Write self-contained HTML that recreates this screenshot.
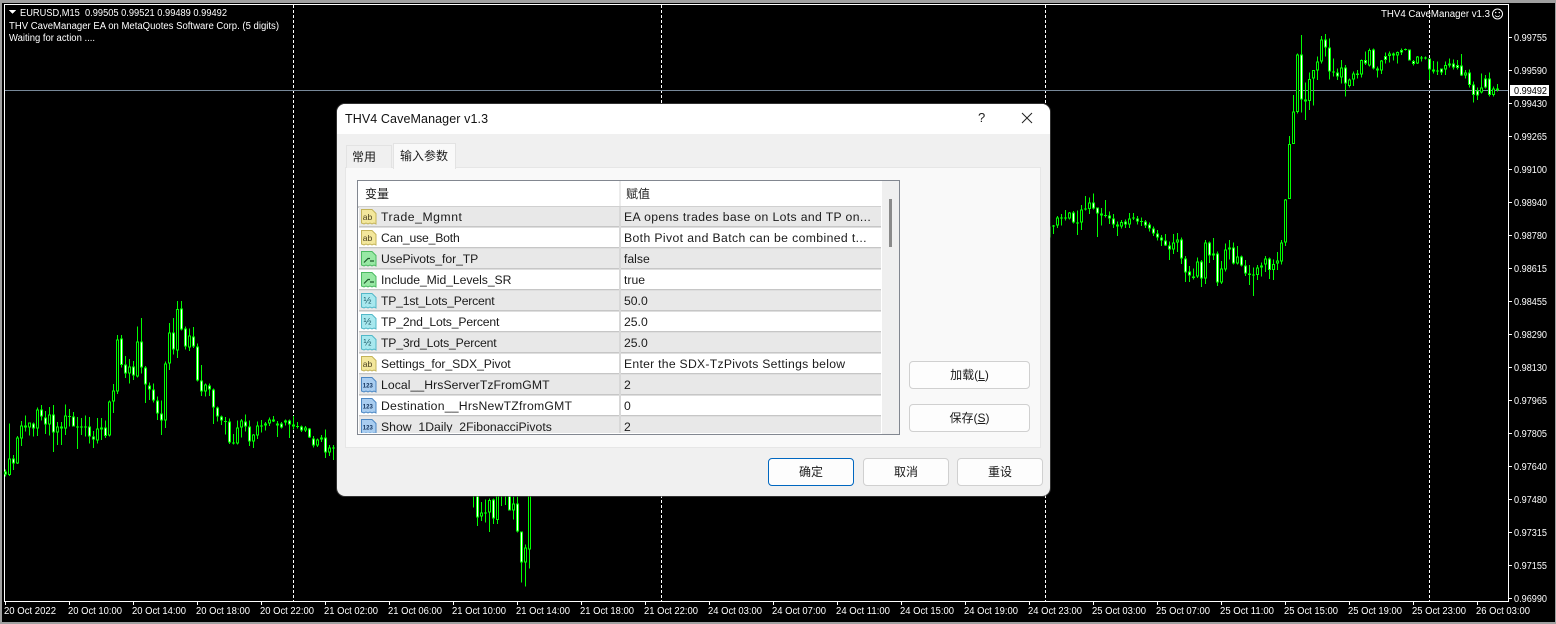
<!DOCTYPE html>
<html lang="zh"><head><meta charset="utf-8"><title>THV4 CaveManager v1.3</title>
<style>
html,body{margin:0;padding:0;width:1556px;height:624px;overflow:hidden;background:#a0a0a0}
body{position:relative;font-family:"Liberation Sans","Noto Sans CJK SC",sans-serif}
svg.chart{position:absolute;left:0;top:0}
.chart text{font-family:"Liberation Sans",sans-serif;font-size:10px;fill:#fff}
.a{position:absolute;white-space:nowrap}
#dlg{position:absolute;left:337px;top:104px;width:713px;height:392px;background:#f0f0f0;border-radius:8px;overflow:hidden;box-shadow:0 0 0 1px rgba(70,70,70,.7);font-size:12.2px;color:#1a1a1a}
#tb{position:absolute;left:0;top:0;width:713px;height:30px;background:#fff}
.panel{position:absolute;left:8px;top:63px;width:694px;height:279px;background:#f9f9f9;border:1px solid #e6e6e6}
.tab{position:absolute;font-size:12px;border:1px solid #e3e3e3;border-bottom:none;box-sizing:border-box;background:#f0f0f0}
.table{position:absolute;left:20px;top:76px;width:543px;height:255px;box-sizing:border-box;border:1px solid #828790;background:#fff;overflow:hidden}
.row{position:absolute;left:1px;width:522px;height:21px;box-sizing:border-box;border-bottom:1px solid #dedede;box-shadow:inset 0 -1px 0 #c6c6c6}
.row.e{background:#e8e8e8}
.row svg{position:absolute;left:2px;top:2px}
.row .n{position:absolute;left:22px;top:0;line-height:20px;white-space:nowrap}
.row .v{position:absolute;left:265px;top:0;line-height:20px;white-space:nowrap}
.row:before{content:"";position:absolute;left:260px;top:0;bottom:-1px;width:2px;background:#d8d8d8}
.btn{position:absolute;box-sizing:border-box;background:#fdfdfd;border:1px solid #d0d0d0;border-radius:4px;text-align:center;font-size:12px;line-height:26px;color:#1a1a1a}
.btn u{text-underline-offset:1px}
.icon text{font-family:"Liberation Sans",sans-serif}
.ab{font-size:8.5px;fill:#4a4020}
.ha{font-size:9.5px;fill:#1d5a66}
.nn{font-size:6px;font-weight:bold;fill:#10305a}
</style></head><body>
<svg class="chart" width="1556" height="624" viewBox="0 0 1556 624" shape-rendering="crispEdges">
<rect x="2" y="3" width="1553" height="619" fill="#000"/>
<path d="M4.5 4.500H1508.500V601.500H4.500Z" fill="none" stroke="#fff"/>
<path d="M293.5 5V601M661.5 5V601M1045.5 5V601M1429.5 5V601" stroke="#fff" stroke-dasharray="3 2"/>
<path d="M5 90.5H1508" stroke="#778899"/>
<g fill="none">
<g transform="translate(.1667,290) scale(.33333)">
<path stroke="#0f0" stroke-width="3" d="M16 538V560M28 400V558M40 495V540M52 438V522M64 393V468M76 376V424M88 397V436M100 398V440M112 352V438M124 345V392M136 363V432M148 351V436M160 345V486M172 396V465M184 396V465M196 343V435M208 357V410M220 366V410M232 381V477M244 384V435M256 376V440M268 381V460M280 423V474M292 384V460M304 384V450M316 392V444M328 332V440M340 282V369M352 135V312M364 135V232M376 198V264M388 207V280M400 213V270M412 109V262M424 84V250M436 228V339M448 277V330M460 280V338M472 319V390M484 331V435M496 214V414M508 99V240M520 84V193M532 33V204M544 33V122M556 110V178M568 115V183M580 111V174M592 160V275M604 225V318M616 280V320M628 280V318M640 295V402M652 349V395M664 376V405M676 381V433M688 385V462M700 432V464M712 391V464M724 387V442M736 373V425M748 391V468M760 432V474M772 395V447M784 390V428M796 396V422M808 383V408M820 378V396M832 393V441M844 396V416M856 388V406M868 388V444M880 378V418M892 396V416M904 406V426M916 408V426M928 414V444M940 438V472M952 446V471M964 435V456M976 418V504M988 465V498M1000 465V510M1012 474V490"/>
<path stroke="#0f0" stroke-width="9" d="M16 544V554M28 505V555M40 505V520M52 442V520M64 406V445M76 406V413M88 397V413M100 401V416M112 358V416M124 358V380M136 382V404M148 373V404M160 373V428M172 409V428M184 409V416M196 376V416M208 378V381M220 379V409M232 409V412M244 409V413M256 409V413M268 409V440M280 440V449M292 416V452M304 412V418M316 412V438M328 334V437M340 301V335M352 148V305M364 145V225M376 223V250M388 230V250M400 230V257M412 154V260M424 154V233M436 232V284M448 286V299M460 298V332M472 331V371M484 371V392M496 220V392M508 127V220M520 127V179M532 57V182M544 55V118M556 115V170M568 136V173M580 139V170M592 169V272M604 272V305M616 283V305M628 287V299M640 298V353M652 352V380M664 380V392M676 393V396M688 394V458M700 457V461M712 412V461M724 391V412M736 394V410M748 409V455M760 433V455M772 406V436M784 406V410M796 400V406M808 388V400M820 388V394M832 400V406M844 400V412M856 391V398M868 391V403M880 403V409M892 408V411M904 409V422M916 412V422M928 416V443M940 445V466M952 448V466M964 442V449M976 442V488M988 472V488M1000 472V475"/>
<path stroke="#fff" stroke-width="3" d="M16 547V551M40 508V517M76 409V410M100 404V413M124 361V377M136 385V401M160 376V425M184 412V413M220 382V406M268 412V437M280 443V446M316 415V435M364 148V222M376 226V247M400 233V254M424 157V230M436 235V281M448 289V296M460 301V329M472 334V368M484 374V389M520 130V176M544 58V115M556 118V167M580 142V167M592 172V269M604 275V302M628 290V296M640 301V350M652 355V377M664 383V389M688 397V455M736 397V407M748 412V452M844 403V409M856 394V395M868 394V400M904 412V419M928 419V440M940 448V463M964 445V446M976 445V485"/>
<path stroke="#000" stroke-width="3" d="M28 508V552M52 445V517M64 409V442M88 400V410M112 361V413M148 376V401M172 412V425M196 379V413M292 419V449M328 337V434M340 304V332M352 151V302M388 233V247M412 157V257M496 223V389M508 130V217M532 60V179M568 139V170M616 286V302M712 415V458M724 394V409M760 436V452M772 409V433M808 391V397M916 415V419M952 451V463M988 475V485"/>
</g>
<g transform="translate(440.1667,490) scale(.33333)">
<path stroke="#0f0" stroke-width="3" d="M100 0V52M112 0V108M124 36V93M136 28V98M148 26V126M160 25V102M172 0V102M184 0V48M196 0V45M208 0V62M220 20V88M232 20V128M244 125V278M256 163V290M268 0V236"/>
<path stroke="#0f0" stroke-width="9" d="M112 0V82M124 67V80M136 67V70M148 30V68M160 28V85M172 0V90M208 0V62M220 40V62M232 40V125M244 125V218M256 172V218M268 0V178"/>
<path stroke="#fff" stroke-width="3" d="M112 0V79M160 31V82M208 0V59M232 43V122M244 128V215"/>
<path stroke="#000" stroke-width="3" d="M124 70V77M148 33V65M172 0V87M220 43V59M256 175V215M268 0V175"/>
</g>
<g transform="translate(1040.1667,180) scale(.33333)">
<path stroke="#0f0" stroke-width="3" d="M31 140V173M40 135V162M52 108V144M64 102V136M76 90V122M88 96V118M100 93V131M112 92V165M124 75V150M136 48V92M148 52V102M160 40V88M172 82V171M184 84V137M196 60V112M208 94V132M220 102V144M232 125V168M244 120V146M256 118V144M268 99V144M280 99V120M292 108V134M304 112V138M316 120V144M328 128V154M340 140V168M352 150V182M364 165V198M376 162V198M388 185V240M400 162V222M412 159V216M424 172V252M436 228V306M448 258V306M460 266V298M472 232V294M484 240V321M496 180V312M508 184V249M520 174V240M532 215V318M544 243V312M556 190V275M568 180V238M580 188V254M592 198V254M604 226V260M616 240V288M628 255V315M640 262V348M652 255V300M664 247V290M676 228V276M688 233V297M700 238V300M712 216V270M724 180V254M736 57V198M748 -132V57"/>
<path stroke="#0f0" stroke-width="9" d="M40 136V140M52 112V137M64 112V116M76 112V115M88 97V116M100 97V128M112 127V130M124 88V128M136 85V88M148 67V87M160 67V86M172 82V101M184 100V106M196 105V108M208 106V116M220 115V134M232 133V139M244 126V140M256 124V134M268 115V134M280 112V115M292 115V124M304 123V126M316 124V137M328 133V146M340 145V161M352 161V172M364 172V181M376 181V197M388 196V208M400 187V208M412 178V188M424 178V235M436 235V277M448 274V287M460 289V294M472 245V290M484 244V296M496 187V296M508 187V227M520 221V227M532 220V308M544 265V308M556 208V268M568 203V209M580 203V250M592 229V251M604 229V257M616 257V281M628 281V285M640 283V287M652 263V285M664 256V263M676 235V254M688 235V270M700 252V270M712 241V250M724 187V245M736 58V187M748 -108V57"/>
<path stroke="#fff" stroke-width="3" d="M100 100V125M160 70V83M172 85V98M208 109V113M220 118V131M256 127V131M292 118V121M316 127V134M328 136V143M340 148V158M352 164V169M364 175V178M376 184V194M388 199V205M424 181V232M436 238V274M448 277V284M484 247V293M508 190V224M532 223V305M580 206V247M604 232V254M616 260V278M688 238V267"/>
<path stroke="#000" stroke-width="3" d="M52 115V134M88 100V113M124 91V125M148 70V84M244 129V137M268 118V131M400 190V205M412 181V185M472 248V287M496 190V293M544 268V305M556 211V265M592 232V248M652 266V282M664 259V260M676 238V251M700 255V267M712 244V247M724 190V242M736 61V184M748 -105V54"/>
</g>
<g transform="translate(1256.1667,0) scale(.33333)">
<path stroke="#0f0" stroke-width="3" d="M112 285V432M124 160V340M136 105V338M148 248V360M160 218V330M172 210V316M184 170V240M196 108V190M208 102V170M220 115V238M232 175V230M244 205V240M256 180V250M268 195V290M280 235V262M292 215V258M304 210V235M316 178V232M328 155V195M340 145V200M352 145V208M364 200V232M376 180V222M388 158V190M400 155V188M412 158V182M424 155V190M436 145V165M448 145V152M460 148V182M472 180V196M484 168V192M496 168V185M508 170V178M520 175V240M532 183V220M544 185V225M556 205V225M568 185V225M580 175V202M592 178V208M604 180V208M616 162V228M628 210V235M640 208V262M652 245V308M664 262V300M676 220V280M688 225V265M700 218V290M712 260V290M724 252V275"/>
<path stroke="#0f0" stroke-width="9" d="M112 334V432M124 163V336M136 163V298M148 298V305M160 237V303M172 210V236M184 184V212M196 118V184M208 118V143M220 142V214M232 214V218M244 218V230M256 203V232M268 203V250M280 238V258M292 220V238M304 220V225M316 180V224M328 180V190M340 150V196M352 148V205M364 205V212M376 182V212M388 168V180M400 160V168M412 160V166M424 156V166M436 150V157M448 147V150M460 148V181M472 183V192M484 170V190M496 172V175M508 172V176M520 176V208M532 208V214M544 212V215M556 206V218M568 195V208M580 190V196M592 190V202M604 195V204M616 196V226M628 218V226M640 218V255M652 253V285M664 272V287M676 263V278M688 235V262M700 235V285M712 265V285M724 265V270"/>
<path stroke="#fff" stroke-width="3" d="M136 166V295M208 121V140M220 145V211M244 221V227M268 206V247M328 183V187M352 151V202M364 208V209M388 171V177M436 153V154M460 151V178M472 186V189M520 179V205M556 209V215M592 193V199M604 198V201M616 199V223M640 221V252M652 256V282M664 275V284M688 238V259M700 238V282"/>
<path stroke="#000" stroke-width="3" d="M112 337V429M124 166V333M160 240V300M172 213V233M184 187V209M196 121V181M256 206V229M280 241V255M292 223V235M316 183V221M340 153V193M376 185V209M400 163V165M424 159V163M484 173V187M568 198V205M628 221V223M676 266V275M712 268V282"/>
</g>
</g>
<path fill="#fff" d="M9 10h7l-3.500 4z"/>
<path stroke="#fff" d="M1508 37.500h4M1508 70.500h4M1508 103.500h4M1508 136.500h4M1508 169.500h4M1508 202.500h4M1508 235.500h4M1508 268.500h4M1508 301.500h4M1508 334.500h4M1508 367.500h4M1508 400.500h4M1508 433.500h4M1508 466.500h4M1508 499.500h4M1508 532.500h4M1508 565.500h4M1508 598.500h4"/>
<path stroke="#fff" d="M5.500 601v4M69.500 601v4M133.500 601v4M197.500 601v4M261.500 601v4M325.500 601v4M389.500 601v4M453.500 601v4M517.500 601v4M581.500 601v4M645.500 601v4M709.500 601v4M773.500 601v4M837.500 601v4M901.500 601v4M965.500 601v4M1029.500 601v4M1093.500 601v4M1157.500 601v4M1221.500 601v4M1285.500 601v4M1349.500 601v4M1413.500 601v4M1477.500 601v4"/>
<rect x="1510" y="85" width="39" height="11" fill="#fff"/>
<g shape-rendering="auto">
<text x="20" y="16" textLength="207" lengthAdjust="spacingAndGlyphs">EURUSD,M15&#160;&#160;0.99505 0.99521 0.99489 0.99492</text>
<text x="9" y="29" textLength="270" lengthAdjust="spacingAndGlyphs">THV CaveManager EA on MetaQuotes Software Corp. (5 digits)</text>
<text x="9" y="41" textLength="86" lengthAdjust="spacingAndGlyphs">Waiting for action ....</text>
<text x="1381" y="17" textLength="109" lengthAdjust="spacingAndGlyphs">THV4 CaveManager v1.3</text>
<circle cx="1497.500" cy="14" r="5" fill="none" stroke="#fff"/>
<circle cx="1495.700" cy="12.600" r=".7" fill="#fff"/><circle cx="1499.300" cy="12.600" r=".7" fill="#fff"/>
<path d="M1495 15.500q2.500 2.500 5 0" fill="none" stroke="#fff" stroke-width=".8"/>
<text x="1514" y="41" textLength="33" lengthAdjust="spacingAndGlyphs">0.99755</text>
<text x="1514" y="74" textLength="33" lengthAdjust="spacingAndGlyphs">0.99590</text>
<text x="1514" y="94" textLength="33" lengthAdjust="spacingAndGlyphs" style="fill:#000">0.99492</text>
<text x="1514" y="107" textLength="33" lengthAdjust="spacingAndGlyphs">0.99430</text>
<text x="1514" y="140" textLength="33" lengthAdjust="spacingAndGlyphs">0.99265</text>
<text x="1514" y="173" textLength="33" lengthAdjust="spacingAndGlyphs">0.99100</text>
<text x="1514" y="206" textLength="33" lengthAdjust="spacingAndGlyphs">0.98940</text>
<text x="1514" y="239" textLength="33" lengthAdjust="spacingAndGlyphs">0.98780</text>
<text x="1514" y="272" textLength="33" lengthAdjust="spacingAndGlyphs">0.98615</text>
<text x="1514" y="305" textLength="33" lengthAdjust="spacingAndGlyphs">0.98455</text>
<text x="1514" y="338" textLength="33" lengthAdjust="spacingAndGlyphs">0.98290</text>
<text x="1514" y="371" textLength="33" lengthAdjust="spacingAndGlyphs">0.98130</text>
<text x="1514" y="404" textLength="33" lengthAdjust="spacingAndGlyphs">0.97965</text>
<text x="1514" y="437" textLength="33" lengthAdjust="spacingAndGlyphs">0.97805</text>
<text x="1514" y="470" textLength="33" lengthAdjust="spacingAndGlyphs">0.97640</text>
<text x="1514" y="503" textLength="33" lengthAdjust="spacingAndGlyphs">0.97480</text>
<text x="1514" y="536" textLength="33" lengthAdjust="spacingAndGlyphs">0.97315</text>
<text x="1514" y="569" textLength="33" lengthAdjust="spacingAndGlyphs">0.97155</text>
<text x="1514" y="602" textLength="33" lengthAdjust="spacingAndGlyphs">0.96990</text>
<text x="4" y="614" textLength="52" lengthAdjust="spacingAndGlyphs">20 Oct 2022</text>
<text x="68" y="614" textLength="54" lengthAdjust="spacingAndGlyphs">20 Oct 10:00</text>
<text x="132" y="614" textLength="54" lengthAdjust="spacingAndGlyphs">20 Oct 14:00</text>
<text x="196" y="614" textLength="54" lengthAdjust="spacingAndGlyphs">20 Oct 18:00</text>
<text x="260" y="614" textLength="54" lengthAdjust="spacingAndGlyphs">20 Oct 22:00</text>
<text x="324" y="614" textLength="54" lengthAdjust="spacingAndGlyphs">21 Oct 02:00</text>
<text x="388" y="614" textLength="54" lengthAdjust="spacingAndGlyphs">21 Oct 06:00</text>
<text x="452" y="614" textLength="54" lengthAdjust="spacingAndGlyphs">21 Oct 10:00</text>
<text x="516" y="614" textLength="54" lengthAdjust="spacingAndGlyphs">21 Oct 14:00</text>
<text x="580" y="614" textLength="54" lengthAdjust="spacingAndGlyphs">21 Oct 18:00</text>
<text x="644" y="614" textLength="54" lengthAdjust="spacingAndGlyphs">21 Oct 22:00</text>
<text x="708" y="614" textLength="54" lengthAdjust="spacingAndGlyphs">24 Oct 03:00</text>
<text x="772" y="614" textLength="54" lengthAdjust="spacingAndGlyphs">24 Oct 07:00</text>
<text x="836" y="614" textLength="54" lengthAdjust="spacingAndGlyphs">24 Oct 11:00</text>
<text x="900" y="614" textLength="54" lengthAdjust="spacingAndGlyphs">24 Oct 15:00</text>
<text x="964" y="614" textLength="54" lengthAdjust="spacingAndGlyphs">24 Oct 19:00</text>
<text x="1028" y="614" textLength="54" lengthAdjust="spacingAndGlyphs">24 Oct 23:00</text>
<text x="1092" y="614" textLength="54" lengthAdjust="spacingAndGlyphs">25 Oct 03:00</text>
<text x="1156" y="614" textLength="54" lengthAdjust="spacingAndGlyphs">25 Oct 07:00</text>
<text x="1220" y="614" textLength="54" lengthAdjust="spacingAndGlyphs">25 Oct 11:00</text>
<text x="1284" y="614" textLength="54" lengthAdjust="spacingAndGlyphs">25 Oct 15:00</text>
<text x="1348" y="614" textLength="54" lengthAdjust="spacingAndGlyphs">25 Oct 19:00</text>
<text x="1412" y="614" textLength="54" lengthAdjust="spacingAndGlyphs">25 Oct 23:00</text>
<text x="1476" y="614" textLength="54" lengthAdjust="spacingAndGlyphs">26 Oct 03:00</text>
</g>
</svg>
<div id="dlg">
<div id="tb"></div>
<div class="a" style="left:8px;top:7px;line-height:16px;font-size:12.5px;letter-spacing:.1px;color:#111">THV4 CaveManager v1.3</div>
<div class="a" style="left:641px;top:6px;line-height:16px;font-size:13px;color:#222">?</div>
<svg class="a" style="left:684px;top:8px" width="12" height="12" viewBox="0 0 12 12"><path d="M1 1L11 11M11 1L1 11" stroke="#222" stroke-width="1" fill="none"/></svg>
<div class="panel"></div>
<div class="tab" style="left:9px;top:41px;width:46px;height:23px;line-height:22px;padding-left:5px">常用</div>
<div class="tab" style="left:56px;top:39px;width:63px;height:26px;line-height:24px;padding-left:6px;background:#f9f9f9;z-index:2">输入参数</div>
<div class="table">
<div class="a" style="left:0;top:0;width:523px;height:25px;border-bottom:2px solid #d0d0d0;background:#fff"></div>
<div class="a" style="left:261px;top:0;width:2px;height:25px;background:#ececec"></div>
<div class="a" style="left:7px;top:3px;line-height:20px;font-size:12px">变量</div>
<div class="a" style="left:268px;top:3px;line-height:20px;font-size:12px">赋值</div>
<div class="row e" style="top:26px"><svg class="icon" width="16" height="16" viewBox="0 0 16 16"><path d="M.5 .5h10.500l4 4v10.500l-2-1-2 1-2-1-2 1-2-1-2 1-2.500-1z" fill="#f3e79c" stroke="#c4b45a"/><text class="ab" x="1.800" y="10.800" textLength="9.500" lengthAdjust="spacingAndGlyphs">ab</text></svg><span class="n" style="letter-spacing:.55px">Trade_Mgmnt</span><span class="v" style="letter-spacing:.37px">EA opens trades base on Lots and TP on...</span></div>
<div class="row" style="top:47px"><svg class="icon" width="16" height="16" viewBox="0 0 16 16"><path d="M.5 .5h10.500l4 4v10.500l-2-1-2 1-2-1-2 1-2-1-2 1-2.500-1z" fill="#f3e79c" stroke="#c4b45a"/><text class="ab" x="1.800" y="10.800" textLength="9.500" lengthAdjust="spacingAndGlyphs">ab</text></svg><span class="n" style="letter-spacing:-.17px">Can_use_Both</span><span class="v" style="letter-spacing:.39px">Both Pivot and Batch can be combined t...</span></div>
<div class="row e" style="top:68px"><svg class="icon" width="16" height="16" viewBox="0 0 16 16"><path d="M.5 .5h10.500l4 4v10.500l-2-1-2 1-2-1-2 1-2-1-2 1-2.500-1z" fill="#98e8a4" stroke="#4cba62"/><path d="M3 11.500L7 7.500H9M9 10H13" fill="none" stroke="#1d5a2c" stroke-width="1.200"/></svg><span class="n" style="letter-spacing:-.06px">UsePivots_for_TP</span><span class="v">false</span></div>
<div class="row" style="top:89px"><svg class="icon" width="16" height="16" viewBox="0 0 16 16"><path d="M.5 .5h10.500l4 4v10.500l-2-1-2 1-2-1-2 1-2-1-2 1-2.500-1z" fill="#98e8a4" stroke="#4cba62"/><path d="M3 11.500L7 7.500H9M9 10H13" fill="none" stroke="#1d5a2c" stroke-width="1.200"/></svg><span class="n" style="letter-spacing:-.05px">Include_Mid_Levels_SR</span><span class="v">true</span></div>
<div class="row e" style="top:110px"><svg class="icon" width="16" height="16" viewBox="0 0 16 16"><path d="M.5 .5h10.500l4 4v10.500l-2-1-2 1-2-1-2 1-2-1-2 1-2.500-1z" fill="#a8e8ee" stroke="#52b8c8"/><text class="ha" x="2.500" y="10.500">½</text></svg><span class="n" style="letter-spacing:-.2px">TP_1st_Lots_Percent</span><span class="v">50.0</span></div>
<div class="row" style="top:131px"><svg class="icon" width="16" height="16" viewBox="0 0 16 16"><path d="M.5 .5h10.500l4 4v10.500l-2-1-2 1-2-1-2 1-2-1-2 1-2.500-1z" fill="#a8e8ee" stroke="#52b8c8"/><text class="ha" x="2.500" y="10.500">½</text></svg><span class="n" style="letter-spacing:-.16px">TP_2nd_Lots_Percent</span><span class="v">25.0</span></div>
<div class="row e" style="top:152px"><svg class="icon" width="16" height="16" viewBox="0 0 16 16"><path d="M.5 .5h10.500l4 4v10.500l-2-1-2 1-2-1-2 1-2-1-2 1-2.500-1z" fill="#a8e8ee" stroke="#52b8c8"/><text class="ha" x="2.500" y="10.500">½</text></svg><span class="n" style="letter-spacing:-.16px">TP_3rd_Lots_Percent</span><span class="v">25.0</span></div>
<div class="row" style="top:173px"><svg class="icon" width="16" height="16" viewBox="0 0 16 16"><path d="M.5 .5h10.500l4 4v10.500l-2-1-2 1-2-1-2 1-2-1-2 1-2.500-1z" fill="#f3e79c" stroke="#c4b45a"/><text class="ab" x="1.800" y="10.800" textLength="9.500" lengthAdjust="spacingAndGlyphs">ab</text></svg><span class="n" style="letter-spacing:-.05px">Settings_for_SDX_Pivot</span><span class="v" style="letter-spacing:.27px">Enter the SDX-TzPivots Settings below</span></div>
<div class="row e" style="top:194px"><svg class="icon" width="16" height="16" viewBox="0 0 16 16"><path d="M.5 .5h10.500l4 4v10.500l-2-1-2 1-2-1-2 1-2-1-2 1-2.500-1z" fill="#a9cdf0" stroke="#4d88c4"/><text class="nn" x="1.800" y="10.500" textLength="10" lengthAdjust="spacingAndGlyphs">123</text></svg><span class="n" style="letter-spacing:.08px">Local__HrsServerTzFromGMT</span><span class="v">2</span></div>
<div class="row" style="top:215px"><svg class="icon" width="16" height="16" viewBox="0 0 16 16"><path d="M.5 .5h10.500l4 4v10.500l-2-1-2 1-2-1-2 1-2-1-2 1-2.500-1z" fill="#a9cdf0" stroke="#4d88c4"/><text class="nn" x="1.800" y="10.500" textLength="10" lengthAdjust="spacingAndGlyphs">123</text></svg><span class="n" style="letter-spacing:.25px">Destination__HrsNewTZfromGMT</span><span class="v">0</span></div>
<div class="row e" style="top:236px"><svg class="icon" width="16" height="16" viewBox="0 0 16 16"><path d="M.5 .5h10.500l4 4v10.500l-2-1-2 1-2-1-2 1-2-1-2 1-2.500-1z" fill="#a9cdf0" stroke="#4d88c4"/><text class="nn" x="1.800" y="10.500" textLength="10" lengthAdjust="spacingAndGlyphs">123</text></svg><span class="n" style="letter-spacing:.03px;height:15px;overflow:hidden">Show_1Daily_2FibonacciPivots</span><span class="v">2</span></div>
<div class="a" style="left:0;top:252px;width:523px;height:2px;background:#fff"></div>
<div class="a" style="left:523px;top:0;width:18px;height:253px;background:#efefef;border-left:1px solid #fff;box-sizing:border-box"></div>
<div class="a" style="left:531px;top:18px;width:3px;height:48px;background:#8a8a8a"></div>
</div>
<div class="btn" style="left:572px;top:257px;width:121px;height:28px">加载(<u>L</u>)</div>
<div class="btn" style="left:572px;top:300px;width:121px;height:28px">保存(<u>S</u>)</div>
<div class="btn" style="left:431px;top:354px;width:86px;height:28px;border-color:#0067c0">确定</div>
<div class="btn" style="left:526px;top:354px;width:86px;height:28px">取消</div>
<div class="btn" style="left:620px;top:354px;width:86px;height:28px">重设</div>
</div>
</body></html>
